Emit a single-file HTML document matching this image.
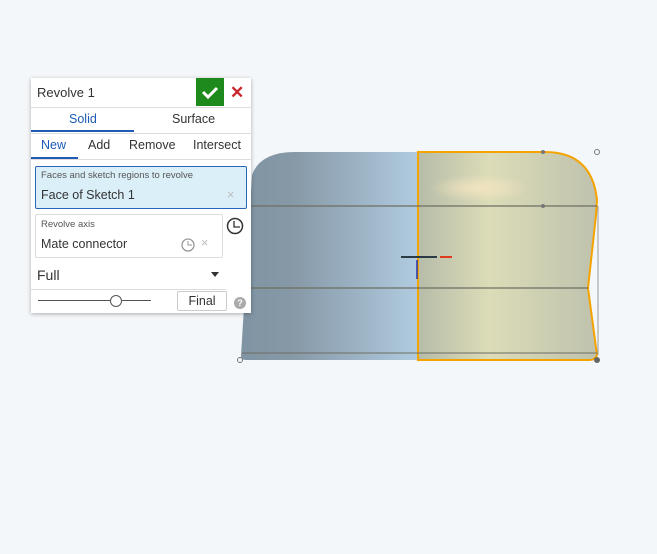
<!DOCTYPE html>
<html><head><style>
body{margin:0;width:657px;height:554px;background:#f4f7fa;font-family:"Liberation Sans",sans-serif;position:relative;overflow:hidden}
.p{position:absolute;left:31px;top:78px;width:220px;height:235px;background:#fff;box-shadow:0 1px 4px rgba(0,0,0,.3);font-size:12.5px;color:#333}
.a{position:absolute}
</style></head><body>
<svg class="a" style="left:0;top:0" width="657" height="554">
<defs>
<linearGradient id="g1" x1="0" x2="1"><stop offset="0" stop-color="#7f94a3"/><stop offset=".3" stop-color="#8799a7"/><stop offset="1" stop-color="#b0cbe0"/></linearGradient>
<linearGradient id="g2" x1="0" x2="1"><stop offset="0" stop-color="#b6bca8"/><stop offset=".4" stop-color="#dcdcb8"/><stop offset="1" stop-color="#bfc2ad"/></linearGradient>
<radialGradient id="g3" cx=".5" cy=".5" r=".5"><stop offset="0" stop-color="#f2e4c0"/><stop offset="1" stop-color="#f2e4c0" stop-opacity="0"/></radialGradient>
</defs>
<path d="M418 152 L295 152 Q260 152 252 175 L241 356 Q241 360 246 360 L418 360Z" fill="url(#g1)"/>
<path d="M418 152 L545 152 Q592 152 597 200 L596 215 L588 288 L597 355 Q595 360 590 360 L418 360Z" fill="url(#g2)" stroke="#f5a300" stroke-width="2"/>
<ellipse cx="480" cy="188" rx="50" ry="14" fill="url(#g3)"/>
<line x1="251" y1="206" x2="597" y2="206" stroke="#6e6e62" stroke-width="1.2"/>
<line x1="251" y1="288" x2="588" y2="288" stroke="#6e6e62" stroke-width="1.2"/>
<line x1="242" y1="353" x2="597" y2="353" stroke="#6e6e62" stroke-width="1"/>
<line x1="598" y1="206" x2="598" y2="355" stroke="#999" stroke-width="1"/>
<line x1="401" y1="257" x2="437" y2="257" stroke="#2b3b45" stroke-width="2"/>
<line x1="440" y1="257" x2="452" y2="257" stroke="#e03a1a" stroke-width="2"/>
<line x1="417" y1="260" x2="417" y2="279" stroke="#2233aa" stroke-width="1.5"/>
<circle cx="597" cy="152" r="2.5" fill="none" stroke="#777"/>
<circle cx="240" cy="360" r="2.5" fill="none" stroke="#777"/>
<circle cx="597" cy="360" r="3" fill="#666"/>
<circle cx="543" cy="152" r="2" fill="#777"/><circle cx="543" cy="206" r="2" fill="#777"/>
</svg>
<div class="p">
<div class="a" style="left:6px;top:7px;font-size:13px">Revolve 1</div>
<div class="a" style="left:165px;top:0;width:28px;height:28px;background:#1e8a1e"><svg width="28" height="28"><path d="M7 14l5 5 9-9" stroke="#fff" stroke-width="3" fill="none"/></svg></div>
<div class="a" style="left:199px;top:5px;color:#c9252c;font-size:17px;font-weight:bold">✕</div>
<div class="a" style="left:0;top:29px;width:220px;border-top:1px solid #ddd"></div>
<div class="a" style="left:38px;top:34px;color:#1d5bb5">Solid</div>
<div class="a" style="left:141px;top:34px">Surface</div>
<div class="a" style="left:0;top:52px;width:103px;height:2px;background:#1d5bb5"></div>
<div class="a" style="left:0;top:55px;width:220px;border-top:1px solid #ddd"></div>
<div class="a" style="left:10px;top:60px;color:#1d5bb5">New</div>
<div class="a" style="left:57px;top:60px">Add</div>
<div class="a" style="left:98px;top:60px">Remove</div>
<div class="a" style="left:162px;top:60px">Intersect</div>
<div class="a" style="left:0;top:79px;width:47px;height:2px;background:#1d5bb5"></div>
<div class="a" style="left:0;top:81px;width:220px;border-top:1px solid #ddd"></div>
<div class="a" style="left:4px;top:88px;width:210px;height:41px;background:#dbeff8;border:1px solid #2a66b8;border-radius:2px"></div>
<div class="a" style="left:10px;top:92px;font-size:9.5px;color:#555">Faces and sketch regions to revolve</div>
<div class="a" style="left:10px;top:110px">Face of Sketch 1</div>
<div class="a" style="left:196px;top:110px;color:#bbb">×</div>
<div class="a" style="left:4px;top:136px;width:186px;height:42px;border:1px solid #ddd;border-radius:2px"></div>
<div class="a" style="left:10px;top:141px;font-size:9.5px;color:#555">Revolve axis</div>
<div class="a" style="left:10px;top:159px">Mate connector</div>
<svg class="a" style="left:150px;top:160px" width="14" height="14"><circle cx="7" cy="7" r="6" fill="none" stroke="#999" stroke-width="1.3"/><path d="M7 3v4h4" fill="none" stroke="#999"/></svg>
<div class="a" style="left:170px;top:158px;color:#bbb">×</div>
<svg class="a" style="left:195px;top:139px" width="18" height="18"><circle cx="9" cy="9" r="7.5" fill="none" stroke="#333" stroke-width="1.5"/><path d="M8 4v6h6" fill="none" stroke="#333" stroke-width="1.3"/></svg>
<div class="a" style="left:6px;top:189px;font-size:14px">Full</div>
<div class="a" style="left:180px;top:194px;border:4px solid transparent;border-top:5px solid #333"></div>
<div class="a" style="left:0;top:211px;width:195px;border-top:1px solid #ddd"></div>
<div class="a" style="left:7px;top:222px;width:113px;height:1px;background:#555"></div>
<div class="a" style="left:79px;top:217px;width:10px;height:10px;border:1px solid #555;border-radius:50%;background:#fff"></div>
<div class="a" style="left:146px;top:213px;width:48px;height:18px;border:1px solid #ccc;border-radius:2px;text-align:center;line-height:18px">Final</div>
<div class="a" style="left:203px;top:219px;width:12px;height:12px;border-radius:50%;background:#aaa;color:#fff;font-size:9px;text-align:center;line-height:12px;font-weight:bold">?</div>
</div>
</body></html>
